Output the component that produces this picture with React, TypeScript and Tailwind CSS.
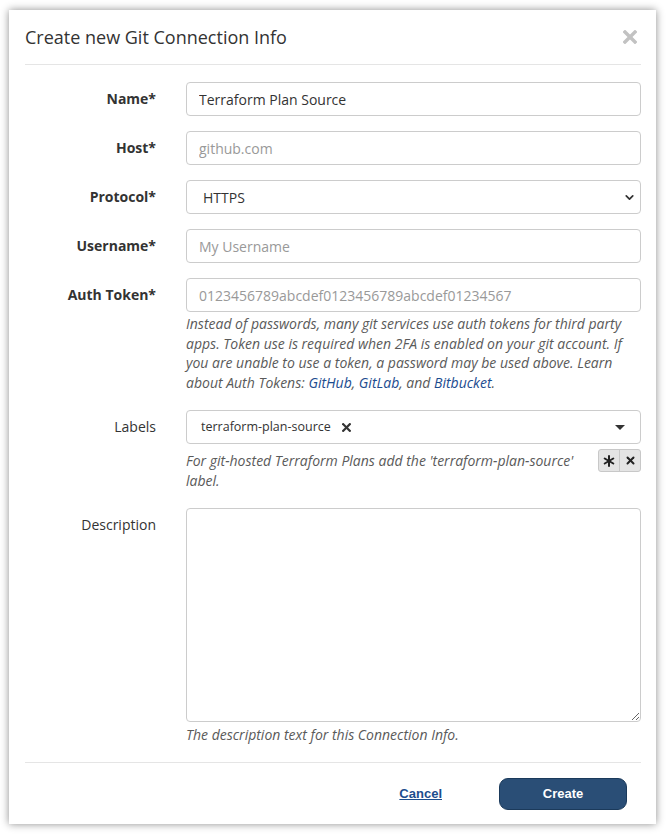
import { ChevronDown } from "lucide-react";

const sans = "font-['Open_Sans',_'Noto_Sans',_sans-serif]";
const arial = "font-['Liberation_Sans',_Arial,_sans-serif]";

function Field({ label, bold = true, top = false, children }: { label: string; bold?: boolean; top?: boolean; children: React.ReactNode }) {
  return (
    <div className="flex items-start gap-[30px]">
      <div className={`w-[131px] shrink-0 text-right text-[14px] text-[#333] ${bold ? "font-bold" : ""} ${top ? "leading-[34px]" : "leading-[34px]"}`}>
        {label}
      </div>
      <div className="min-w-0 flex-1">{children}</div>
    </div>
  );
}

const inputCls =
  "block h-[34px] w-full rounded-[4px] border border-[#ccc] bg-white px-3 text-[14px] text-[#333] placeholder:text-[#999] outline-none";

function Help({ children, className = "" }: { children: React.ReactNode; className?: string }) {
  return <p className={`text-[14px] italic leading-[19.6px] text-[#5a5a5a] ${className}`}>{children}</p>;
}

export default function App() {
  return (
    <div className={`min-h-screen bg-white pl-[9px] pt-[10px] ${sans}`}>
      <div className="w-[647px] bg-white shadow-[0_0_8px_rgba(0,0,0,0.45)]">
        <div className="pl-4 pr-[15px]">
          <div className="flex h-[55px] items-center justify-between border-b border-[#e5e5e5]">
            <h1 className="text-[18px] text-[#333]">Create new Git Connection Info</h1>
            <svg className="mr-[4px]" width="14" height="14" viewBox="0 0 14 14" stroke="#c2c2c2" strokeWidth="3.4" strokeLinecap="square">
              <line x1="2" y1="2" x2="12" y2="12" />
              <line x1="12" y1="2" x2="2" y2="12" />
            </svg>
          </div>

          <div className="flex flex-col gap-[15px] pt-[17px]">
            <Field label="Name*">
              <input className={inputCls} defaultValue="Terraform Plan Source" />
            </Field>
            <Field label="Host*">
              <input className={inputCls} placeholder="github.com" />
            </Field>
            <Field label="Protocol*">
              <div className="relative">
                <select className={`${inputCls} appearance-none pl-4`} defaultValue="HTTPS">
                  <option>HTTPS</option>
                  <option>SSH</option>
                </select>
                <ChevronDown className="pointer-events-none absolute right-[5px] top-[11px] h-[13px] w-[13px] text-[#333]" strokeWidth={3.2} />
              </div>
            </Field>
            <Field label="Username*">
              <input className={inputCls} placeholder="My Username" />
            </Field>
            <Field label="Auth Token*">
              <input className={inputCls} placeholder="0123456789abcdef0123456789abcdef01234567" />
              <Help className="mt-[2px] mb-[3px]">
                Instead of passwords, many git services use auth tokens for third party apps. Token use is required when 2FA is enabled on your git account. If you are unable to use a token, a password may be used above. Learn about Auth Tokens:{" "}
                <a className="text-[#1c4c8f]" href="#">GitHub</a>,{" "}
                <a className="text-[#1c4c8f]" href="#">GitLab</a>, and{" "}
                <a className="text-[#1c4c8f]" href="#">Bitbucket</a>.
              </Help>
            </Field>
            <Field label="Labels" bold={false}>
              <div className="flex h-[34px] items-center rounded-[4px] border border-[#ccc] bg-white pl-[14px] pr-[15px]">
                <span className="text-[12.5px] text-[#333]">terraform-plan-source</span>
                <svg className="ml-[11px]" width="9" height="9" viewBox="0 0 9 9" stroke="#333" strokeWidth="2.2" strokeLinecap="square">
                  <line x1="1.2" y1="1.2" x2="7.8" y2="7.8" />
                  <line x1="7.8" y1="1.2" x2="1.2" y2="7.8" />
                </svg>
                <span className="ml-auto h-0 w-0 border-x-[5px] border-t-[5px] border-x-transparent border-t-[#333]" />
              </div>
              <div className="mb-[2px] mt-[5px] flex items-start gap-[14px]">
                <Help className="flex-1 pt-[2px]">For git-hosted Terraform Plans add the 'terraform-plan-source' label.</Help>
                <div className="flex h-[23px] overflow-hidden rounded-[3px] border border-[#c8c8c8] bg-[#e4e4e4]">
                  <span className="flex w-[21px] items-center justify-center border-r border-[#c8c8c8]">
                    <svg width="12" height="12" viewBox="0 0 12 12" stroke="#222" strokeWidth="2" strokeLinecap="round">
                      <line x1="6" y1="1" x2="6" y2="11" />
                      <line x1="1.7" y1="3.5" x2="10.3" y2="8.5" />
                      <line x1="1.7" y1="8.5" x2="10.3" y2="3.5" />
                    </svg>
                  </span>
                  <span className="flex w-[20px] items-center justify-center">
                    <svg width="9" height="9" viewBox="0 0 9 9" stroke="#222" strokeWidth="2" strokeLinecap="round">
                      <line x1="1.5" y1="1.5" x2="7.5" y2="7.5" />
                      <line x1="7.5" y1="1.5" x2="1.5" y2="7.5" />
                    </svg>
                  </span>
                </div>
              </div>
            </Field>
            <Field label="Description" bold={false} top>
              <textarea className="block h-[214px] w-full resize-y rounded-[4px] border border-[#ccc] bg-white px-3 py-2 text-[14px] text-[#333] outline-none" />
              <Help className="mt-[3px]">The description text for this Connection Info.</Help>
            </Field>
          </div>

          <div className="mt-[18px] flex items-center justify-end border-t border-[#e5e5e5] pb-[14px] pr-[14px] pt-[15px]">
            <a href="#" className={`mr-[57px] text-[13px] font-bold text-[#1d4d8d] underline ${arial}`}>
              Cancel
            </a>
            <button className={`h-[32px] w-[128px] rounded-[9px] border border-[#1b3a5b] bg-[#2a4e76] text-[13px] font-bold text-white ${arial}`}>
              Create
            </button>
          </div>
        </div>
      </div>
    </div>
  );
}
